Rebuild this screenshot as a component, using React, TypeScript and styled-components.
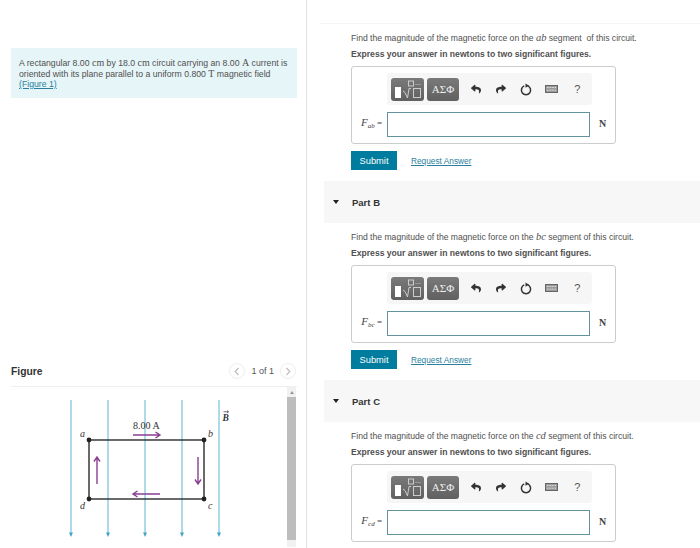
import React from 'react';
import styled, { createGlobalStyle } from 'styled-components';
import { FaReply, FaShare } from 'react-icons/fa';

const sans = '"Liberation Sans", Arial, sans-serif';
const serif = '"Liberation Serif", "Times New Roman", serif';

const GlobalStyle = createGlobalStyle`
  html, body {
    margin: 0;
    padding: 0;
    background: #fff;
    overflow: hidden;
  }
`;

// Part C runs past the bottom of the window, its buttons are below the fold
const parts = [
  { key: 'A', seg: 'ab', spaced: true, hasActions: true },
  { key: 'B', seg: 'bc', spaced: false, hasActions: true },
  { key: 'C', seg: 'cd', spaced: false, hasActions: false }
];

const TemplateIcon = () => (
  <svg width="30" height="19" viewBox="0 0 30 19" fill="none">
    <rect x="2" y="7" width="6" height="11" fill="#fff" />
    <rect x="15.5" y="1" width="5" height="5" stroke="#ccc" strokeWidth="1" />
    <path d="M10 11l2 1.5 2.5 5.5 1.5-9.5h2" stroke="#ccc" strokeWidth="1" />
    <rect x="20.5" y="8.5" width="7" height="9" stroke="#ccc" strokeWidth="1" />
    <path d="M22 4.5h6" stroke="#999" strokeWidth="1" />
  </svg>
);

const ResetIcon = () => (
  <svg width="12" height="13" viewBox="0 0 12 13" fill="none">
    <path d="M7.8 2.9a4.6 4.6 0 1 1-3.6 0" stroke="#333" strokeWidth="1.5" />
    <path d="M5.5 0.4l3.6 2.3-3.6 2.1z" fill="#333" />
  </svg>
);

const KeyboardIcon = () => (
  <svg width="13" height="8" viewBox="0 0 13 8">
    <rect x="0.5" y="0.5" width="12" height="7" fill="#9a9a9a" stroke="#666" strokeWidth="1" />
    <path d="M2 2.5h9M2 5.2h9" stroke="#e2e2e2" strokeWidth="1" strokeDasharray="1 .6" />
  </svg>
);

const Chevron: React.FC<{ dir: 'left' | 'right' }> = ({ dir }) => (
  <svg width="6" height="9" viewBox="0 0 6 9" fill="none">
    <path d={dir === 'left' ? 'M4.5 1L1.2 4.5l3.3 3.5' : 'M1.5 1l3.3 3.5L1.5 8'} stroke="#bbb" strokeWidth="1.1" />
  </svg>
);

const CircuitFigure = () => {
  const fieldX = [71, 108, 145, 182, 219];
  const purple = '#8a3f92';
  return (
    <svg width="274" height="160" viewBox="11 388 274 160" fill="none">
      {fieldX.map((x) => (
        <g key={x}>
          <path d={`M${x} 401V536`} stroke="#5fb5d2" strokeWidth="1" />
          <path d={`M${x - 2} 533.5h4l-2 4.5z`} fill="#3ea3c6" />
        </g>
      ))}
      <rect x="89" y="441" width="115" height="59" stroke="#2b2b2b" strokeWidth="1.4" />
      {[[89, 441], [204, 441], [89, 500], [204, 500]].map(([x, y]) => (
        <circle key={`${x}-${y}`} cx={x} cy={y} r="2.4" fill="#222" />
      ))}
      <g stroke={purple} strokeWidth="1.4">
        <path d="M133 436h27M155.5 433l4.5 3-4.5 3" />
        <path d="M160 495h-27M137.5 492l-4.5 3 4.5 3" />
        <path d="M97 485V458M94 462.5l3-4.5 3 4.5" />
        <path d="M198 458v27M195 480.5l3 4.5 3-4.5" />
      </g>
      <g fontFamily={serif} fill="#333">
        <text x="133" y="430" fontSize="10">8.00 A</text>
        <g fontStyle="italic" fontSize="10">
          <text x="80" y="438">a</text>
          <text x="208" y="438">b</text>
          <text x="208" y="510">c</text>
          <text x="80" y="510">d</text>
        </g>
        <text x="222.5" y="421.5" fontStyle="italic" fontWeight="bold" fontSize="9.5">B</text>
        <path d="M223.5 412.8h5M227 411.5l1.5 1.3-1.5 1.3" stroke="#333" strokeWidth="0.7" fill="none" />
      </g>
    </svg>
  );
};

const App: React.FC = () => (
  <Page>
    <GlobalStyle />
    <LeftColumn>
      <InfoBox>
        A rectangular 8.00 <Unit>cm</Unit> by 18.0 <Unit>cm</Unit> circuit carrying an 8.00 <Unit>A</Unit> current is
        <br />
        oriented with its plane parallel to a uniform 0.800 <Unit>T</Unit> magnetic field
        <br />
        <TextLink>(Figure 1)</TextLink>
      </InfoBox>
      <FigureSection>
        <FigureHeader>
          <FigureTitle>Figure</FigureTitle>
          <Pager>
            <PagerButton><Chevron dir="left" /></PagerButton>
            <PagerLabel>1 of 1</PagerLabel>
            <PagerButton><Chevron dir="right" /></PagerButton>
          </Pager>
        </FigureHeader>
        <FigureBody>
          <CircuitFigure />
          <Scrollbar>
            <ScrollArrow />
            <ScrollThumb />
          </Scrollbar>
        </FigureBody>
      </FigureSection>
    </LeftColumn>
    <RightColumn>
      <TopRule />
      {parts.map((part) => (
        <Part key={part.key}>
          {part.key !== 'A' && (
            <PartBand>
              <Caret />
              <PartTitle>Part {part.key}</PartTitle>
            </PartBand>
          )}
          <PartBody>
            <Question>
              Find the magnitude of the magnetic force on the <MathVar>{part.seg}</MathVar> segment{part.spaced ? '\u00a0 ' : ' '}of this circuit.
            </Question>
            <Instruction>Express your answer in newtons to two significant figures.</Instruction>
            <AnswerBox>
              <Toolbar>
                <ToolGroup>
                  <TemplateButton $wide><TemplateIcon /></TemplateButton>
                  <TemplateButton>ΑΣΦ</TemplateButton>
                </ToolGroup>
                <ToolIcon><FaReply size={10} /></ToolIcon>
                <ToolIcon><FaShare size={10} /></ToolIcon>
                <ToolIcon><ResetIcon /></ToolIcon>
                <ToolIcon><KeyboardIcon /></ToolIcon>
                <ToolIcon $help>?</ToolIcon>
              </Toolbar>
              <InputRow>
                <FieldLabel>
                  <LabelVar>F</LabelVar><Sub>{part.seg}</Sub> =
                </FieldLabel>
                <AnswerInput />
                <UnitLabel>N</UnitLabel>
              </InputRow>
            </AnswerBox>
            {part.hasActions && (
              <Actions>
                <SubmitButton>Submit</SubmitButton>
                <RequestLink>Request Answer</RequestLink>
              </Actions>
            )}
          </PartBody>
        </Part>
      ))}
    </RightColumn>
  </Page>
);

const Page = styled.div`
  display: flex;
  width: 700px;
  height: 548px;
  overflow: hidden;
  font-family: ${sans};
  color: #444;
`;

const LeftColumn = styled.div`
  display: flex;
  flex-direction: column;
  box-sizing: border-box;
  width: 307px;
  height: 548px;
  padding: 48px 9px 0 11px;
  border-right: 1px solid #dfe3e6;
  flex-shrink: 0;
`;

const InfoBox = styled.div`
  box-sizing: border-box;
  height: 50px;
  padding: 10px 8px 0;
  background: #e6f5f7;
  font-size: 8.7px;
  line-height: 10.5px;
  color: #505050;
  white-space: nowrap;
`;

const Unit = styled.span`
  font-family: ${serif};
  font-size: 10px;
`;

const TextLink = styled.span`
  color: #2a7f9e;
  text-decoration: underline;
`;

const FigureSection = styled.div`
  margin-top: auto;
  height: 187px;
`;

const FigureHeader = styled.div`
  display: flex;
  align-items: center;
  justify-content: space-between;
  box-sizing: border-box;
  height: 26px;
  padding: 0 1px 5px 0;
  border-bottom: 1px solid #eee;
`;

const FigureTitle = styled.div`
  font-size: 10.3px;
  font-weight: bold;
  color: #333;
`;

const Pager = styled.div`
  display: flex;
  align-items: center;
  gap: 6px;
`;

const PagerButton = styled.div`
  display: flex;
  align-items: center;
  justify-content: center;
  box-sizing: border-box;
  width: 16px;
  height: 16px;
  border: 1px solid #eee;
  border-radius: 50%;
`;

const PagerLabel = styled.div`
  font-size: 9px;
  color: #555;
`;

const FigureBody = styled.div`
  display: flex;
  justify-content: space-between;
  height: 160px;
`;

const Scrollbar = styled.div`
  display: flex;
  flex-direction: column;
  align-items: center;
  width: 9px;
  margin-right: 1px;
  background: #f1f1f1;
`;

const ScrollArrow = styled.div`
  width: 0;
  height: 0;
  margin: 4px 0 3px;
  border-left: 2px solid transparent;
  border-right: 2px solid transparent;
  border-bottom: 3px solid #999;
`;

const ScrollThumb = styled.div`
  width: 100%;
  height: 143px;
  background: #bdbdbd;
`;

const RightColumn = styled.div`
  flex: 1;
  min-width: 0;
`;

const TopRule = styled.div`
  height: 24px;
  margin-left: 13px;
  border-bottom: 1px solid #f4f4f4;
  box-sizing: border-box;
`;

const Part = styled.section`
  display: flex;
  flex-direction: column;
`;

const PartBand = styled.div`
  display: flex;
  align-items: center;
  height: 42px;
  margin-left: 17px;
  background: #f7f7f7;
`;

const Caret = styled.div`
  width: 0;
  height: 0;
  margin-left: 9px;
  border-left: 3.5px solid transparent;
  border-right: 3.5px solid transparent;
  border-top: 4px solid #222;
`;

const PartTitle = styled.div`
  margin-left: 13px;
  font-size: 9.5px;
  font-weight: bold;
  color: #333;
`;

const PartBody = styled.div`
  padding: 3px 0 11px 44px;
`;

const Question = styled.div`
  height: 18px;
  font-size: 8.6px;
  line-height: 21px;
  color: #505050;
  white-space: nowrap;
`;

const Instruction = styled.div`
  height: 18px;
  font-size: 8.6px;
  font-weight: bold;
  line-height: 18px;
  color: #505050;
  white-space: nowrap;
`;

const MathVar = styled.i`
  font-family: ${serif};
  font-size: 10.5px;
`;

const LabelVar = styled.i`
  font-size: 11px;
`;

const AnswerBox = styled.div`
  box-sizing: border-box;
  width: 265px;
  height: 78px;
  margin-top: 3px;
  padding: 6px 0 0 35px;
  border: 1px solid #ccc;
  border-radius: 3px;
`;

const Toolbar = styled.div`
  display: flex;
  align-items: center;
  box-sizing: border-box;
  width: 205px;
  height: 32px;
  padding-left: 4px;
  background: #f6f6f6;
  border-radius: 3px;
`;

const ToolGroup = styled.div`
  display: flex;
  gap: 3px;
  margin-right: 4px;
`;

const TemplateButton = styled.div<{ $wide?: boolean }>`
  display: flex;
  align-items: center;
  justify-content: center;
  width: ${({ $wide }) => ($wide ? '33px' : '32px')};
  height: 23px;
  background: linear-gradient(#7a7a7a, #606060);
  border-radius: 3px;
  font-family: ${serif};
  font-size: 11px;
  color: #eee;
`;

const ToolIcon = styled.div<{ $help?: boolean }>`
  display: flex;
  align-items: center;
  justify-content: center;
  width: 25.4px;
  font-family: ${sans};
  font-size: ${({ $help }) => ($help ? '11px' : '10px')};
  color: ${({ $help }) => ($help ? '#555' : '#333')};
`;

const InputRow = styled.div`
  display: flex;
  align-items: center;
  margin: 7px 0 0 -35px;
`;

const FieldLabel = styled.div`
  box-sizing: border-box;
  width: 35px;
  padding: 0 5px 3px 0;
  font-family: ${serif};
  font-size: 9px;
  text-align: right;
  color: #444;
  white-space: nowrap;
`;

const Sub = styled.i`
  font-size: 7px;
  vertical-align: -1.5px;
`;

const AnswerInput = styled.div`
  box-sizing: border-box;
  width: 203px;
  height: 25px;
  border: 1px solid #62939f;
`;

const UnitLabel = styled.div`
  margin: 0 0 2px 9px;
  font-family: ${serif};
  font-size: 10px;
  font-weight: bold;
  color: #444;
`;

const Actions = styled.div`
  display: flex;
  align-items: center;
  gap: 14px;
  margin-top: 7px;
`;

const SubmitButton = styled.div`
  display: flex;
  align-items: center;
  justify-content: center;
  width: 46px;
  height: 19px;
  background: #007c9e;
  font-size: 9.3px;
  color: #fff;
`;

const RequestLink = styled.div`
  font-size: 8.3px;
  color: #2a7f9e;
  text-decoration: underline;
`;

export default App;
